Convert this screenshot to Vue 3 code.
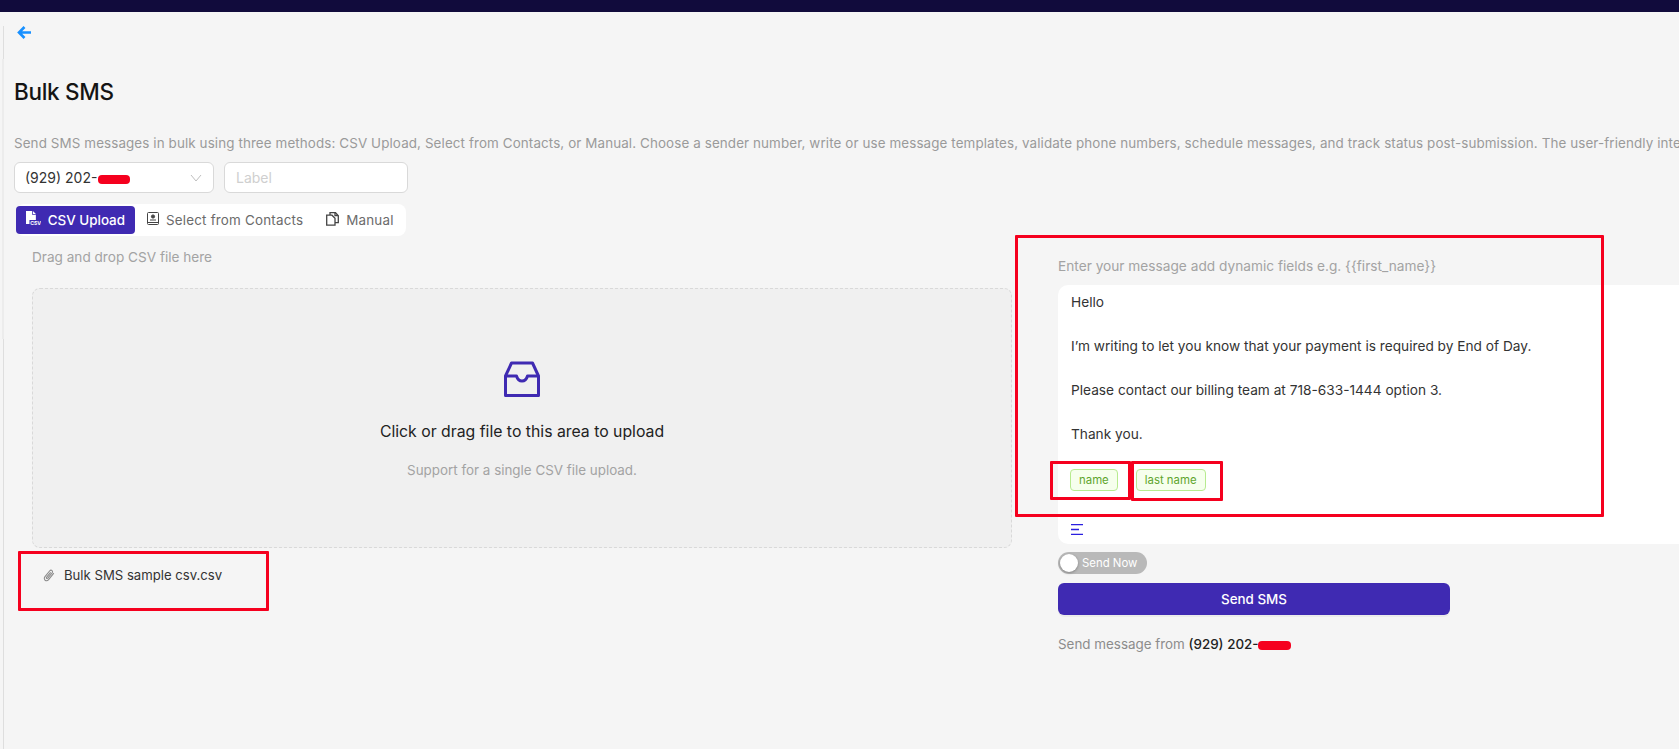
<template>
  <div class="page">
    <div class="topbar"></div>
    <div class="content">
      <button class="back-btn" aria-label="Back">
        <svg width="15" height="13" viewBox="0 0 15 13" fill="none" stroke="#1890ff" stroke-width="2.6">
          <path d="M14 6.500H2.500M7.500 1 2 6.500 7.500 12" />
        </svg>
      </button>
      <h1 class="title">Bulk SMS</h1>
      <p class="desc">
        Send SMS messages in bulk using three methods: CSV Upload, Select from Contacts, or Manual. Choose a sender number, write or use message templates, validate phone numbers, schedule messages, and track status post-submission. The user-friendly interface makes bulk messaging simple and efficient for every team.
      </p>

      <div class="sender-row">
        <div class="select">
          <span>(929) 202-<i class="redact"></i></span>
          <svg width="12" height="8" viewBox="0 0 12 8" fill="none" stroke="#bfbfbf" stroke-width="1">
            <path d="M1 1l5 6 5-6" />
          </svg>
        </div>
        <div class="label-input">Label</div>
      </div>

      <div class="tabs">
        <div
          v-for="tab in tabs"
          :key="tab.name"
          :class="['tab', { active: tab.name === activeTab }]"
        >
          <svg v-if="tab.icon === 'csv'" width="15" height="16" viewBox="0 0 15 16">
            <path fill="currentColor" d="M0 0h6.500L10 3.500V9H3.500v4H0z" />
            <path fill="#3f2ab2" d="M6.200 0v3.800H10V3L7 0z" />
            <path fill="currentColor" d="M7 0l3 3H7z" />
            <text x="4.200" y="14" font-size="5.200" font-weight="700" fill="currentColor" font-family="Inter, sans-serif">CSV</text>
          </svg>
          <svg v-else-if="tab.icon === 'contacts'" width="12" height="13" viewBox="0 0 12 13" fill="none" stroke="currentColor">
            <rect x=".5" y=".5" width="11" height="12" rx="1" />
            <circle cx="6" cy="4.500" r="1.600" fill="currentColor" />
            <path d="M3 8h6M.5 10.500h11" />
          </svg>
          <svg v-else width="13" height="14" viewBox="0 0 13 14" fill="none" stroke="currentColor" stroke-width="1.300">
            <path d="M4 3V.7h5.500l2.800 3v7H9" />
            <path d="M.7 3.200H6l3 3v7H.7z" />
            <path d="M9 .7v3h3.300" />
          </svg>
          <span>{{ tab.name }}</span>
        </div>
      </div>

      <div class="columns">
        <div class="left-col">
          <p class="hint drag-hint">Drag and drop CSV file here</p>
          <div class="dropzone">
            <svg class="inbox" width="36" height="36" viewBox="0 0 36 36" fill="none" stroke="#3f2ab2" stroke-width="3" stroke-linejoin="round">
              <path d="M7.500 2h21L34.500 15v19.500h-33V15z" />
              <path d="M1.500 15h11c1 3.400 3 5 5.500 5s4.500-1.600 5.500-5h11" />
            </svg>
            <p class="drop-text">Click or drag file to this area to upload</p>
            <p class="drop-sub">Support for a single CSV file upload.</p>
          </div>
          <div class="file-row">
            <svg width="12" height="14" viewBox="0 0 12 14" fill="none" stroke="#8c8c8c" stroke-width="1.100">
              <path d="M10.800 5.200 5.600 11.600c-1 1.200-2.500 1.400-3.500.6s-1.100-2.300-.1-3.500L6.600 3c.7-.8 1.700-1 2.400-.4s.7 1.600 0 2.400L4.800 10.200c-.4.4-.9.5-1.200.2s-.3-.8.1-1.200l4-4.900" />
            </svg>
            <span>Bulk SMS sample csv.csv</span>
          </div>
        </div>

        <div class="right-col">
          <p class="hint msg-hint">Enter your message add dynamic fields e.g. {{ placeholder }}</p>
          <div class="editor">
            <p v-for="line in messageLines" :key="line" class="msg-line">{{ line }}</p>
            <div class="tags">
              <span v-for="tag in tags" :key="tag" class="tag">{{ tag }}</span>
            </div>
            <svg class="align-icon" width="12" height="11" viewBox="0 0 12 11" stroke="#2a1fe0" stroke-width="1.300">
              <path d="M0 .7h12M0 5.500h8M0 10.300h12" />
            </svg>
          </div>
          <div class="switch">
            <span class="knob"></span>
            <span>Send Now</span>
          </div>
          <button class="send-btn">Send SMS</button>
          <p class="from">
            Send message from <b>(929) 202-<i class="redact small"></i></b>
          </p>
        </div>
      </div>
    </div>

    <!-- red review marks drawn over the screenshot -->
    <i class="mark mark-file"></i>
    <i class="mark mark-message"></i>
    <i class="mark mark-name"></i>
    <i class="mark mark-last"></i>
  </div>
</template>

<script setup>
const tabs = [
  { name: 'CSV Upload', icon: 'csv' },
  { name: 'Select from Contacts', icon: 'contacts' },
  { name: 'Manual', icon: 'copy' },
]
const activeTab = 'CSV Upload'
const placeholder = '{{first_name}}'
const messageLines = [
  'Hello',
  'I’m writing to let you know that your payment is required by End of Day.',
  'Please contact our billing team at 718-633-1444 option 3.',
  'Thank you.',
]
const tags = ['name', 'last name']
</script>

<style>
html, body {
  margin: 0;
  background: #f5f5f5;
  overflow: hidden;
}
</style>

<style scoped>
* {
  box-sizing: border-box;
}
.page {
  position: relative;
  width: 1679px;
  height: 749px;
  overflow: hidden;
  background: #f5f5f5;
  font-family: Inter, "Liberation Sans", sans-serif;
  color: #1f1f1f;
}
.topbar {
  height: 12px;
  background: #110b3c;
}
.content {
  position: relative;
  height: 737px;
  margin-left: 3px;
  padding: 0 0 0 13px;
  border-left: 1px solid #dedede;
}
/* sidebar edge showing next to the page line */
.content::before {
  content: "";
  position: absolute;
  left: -2px;
  top: 33px;
  width: 2px;
  height: 280px;
  background: #ececec;
}
.back-btn {
  display: block;
  width: 15px;
  height: 13px;
  margin: 14px 0 0;
  padding: 0;
  border: none;
  background: none;
}
.title {
  margin: 38px 0 0 -3px;
  font-size: 22.500px;
  line-height: 30px;
  font-weight: 500;
  letter-spacing: -0.3px;
  color: #141414;
}
.desc {
  margin: 26px 0 0 -3px;
  white-space: nowrap;
  font-size: 13.400px;
  line-height: 20px;
  letter-spacing: 0.11px;
  color: #9a9a9a;
}
.sender-row {
  display: flex;
  gap: 10px;
  margin: 9px 0 0 -3px;
}
.select, .label-input {
  display: flex;
  align-items: center;
  height: 31px;
  background: #fff;
  border: 1px solid #d9d9d9;
  border-radius: 6px;
  font-size: 14px;
}
.select {
  width: 200px;
  justify-content: space-between;
  padding: 0 11px 0 10px;
  color: #333;
}
.label-input {
  width: 184px;
  padding: 0 11px;
  color: #cfcfcf;
}
.redact {
  display: inline-block;
  width: 32px;
  height: 9px;
  margin-left: 1px;
  background: #f5001e;
  border-radius: 4px;
  vertical-align: -1px;
}
.redact.small {
  width: 33px;
  margin-left: 0;
}
.tabs {
  display: flex;
  align-items: center;
  width: 390px;
  height: 32px;
  margin: 11px 0 0 -1px;
  background: #fff;
  border-radius: 8px;
}
.tab {
  display: flex;
  align-items: center;
  gap: 7px;
  height: 28px;
  padding: 0 11px 0 12px;
  font-size: 13.400px;
  letter-spacing: 0.2px;
  color: #6b6b6b;
  white-space: nowrap;
}
.tab svg {
  margin-top: -3px;
  color: #444;
}
.tab.active {
  width: 119px;
  padding: 0 10px;
  background: #3f2ab2;
  color: #fff;
  font-weight: 500;
  letter-spacing: 0;
  border-radius: 4px;
}
.tab.active svg {
  color: #fff;
}
.columns {
  display: flex;
  align-items: flex-start;
}
.left-col {
  width: 980px;
  margin-left: 15px;
  flex: none;
}
.hint {
  margin: 0;
  font-size: 13.600px;
  line-height: 20px;
  color: #a3a3a3;
}
.drag-hint {
  margin-top: 11px;
}
.dropzone {
  display: flex;
  flex-direction: column;
  align-items: center;
  height: 260px;
  margin-top: 21px;
  padding-top: 72px;
  background: #f0f0f0;
  border: 1px dashed #d9d9d9;
  border-radius: 8px;
}
.drop-text {
  margin: 23px 0 0;
  font-size: 15.800px;
  line-height: 24px;
  color: #222;
}
.drop-sub {
  margin: 16px 0 0;
  font-size: 13.400px;
  line-height: 20px;
  color: #a3a3a3;
}
.file-row {
  display: flex;
  align-items: center;
  gap: 9px;
  margin: 17px 0 0 11px;
  font-size: 13.150px;
  line-height: 20px;
  color: #333;
}
.right-col {
  flex: none;
  width: 621px;
  margin-left: 46px;
}
.msg-hint {
  margin-top: 20px;
  font-size: 13.700px;
}
.editor {
  height: 259px;
  margin-top: 9px;
  padding: 6px 13px 0 12px;
  background: #fff;
  border-radius: 10px 0 0 10px;
}
.msg-line {
  margin: 0 0 22px 1px;
  font-size: 13.700px;
  line-height: 22px;
  color: #333;
}
.tags {
  display: flex;
  gap: 18px;
  margin-top: 24px;
}
.tag {
  height: 22px;
  padding: 0 8px;
  border: 1px solid #b7eb8f;
  border-radius: 4px;
  background: #f6ffed;
  color: #5fa52d;
  font-size: 11.400px;
  line-height: 20px;
}
.align-icon {
  display: block;
  margin: 33px 0 0 1px;
}
.switch {
  display: flex;
  align-items: center;
  gap: 4px;
  width: 89px;
  height: 22px;
  margin-top: 8px;
  padding: 0 2px;
  background: #b9b9b9;
  border-radius: 11px;
  color: #fff;
  font-size: 11.400px;
}
.knob {
  width: 18px;
  height: 18px;
  background: #fff;
  border-radius: 50%;
  box-shadow: 0 1px 3px rgba(0, 0, 0, 0.3);
}
.send-btn {
  display: block;
  width: 392px;
  height: 32px;
  margin-top: 9px;
  padding: 0;
  border: none;
  border-radius: 6px;
  background: #3f2ab2;
  color: #fff;
  font: 500 13.400px Inter, sans-serif;
  box-shadow: 0 2px 0 rgba(0, 0, 0, 0.04);
}
.from {
  margin: 19px 0 0;
  font-size: 13.400px;
  line-height: 20px;
  color: #8c8c8c;
}
.from b {
  font-weight: 500;
  color: #222;
}
.mark {
  position: absolute;
  display: block;
  border: 3px solid #f5001e;
  border-radius: 1px;
}
.mark-file {
  left: 18px;
  top: 551px;
  width: 251px;
  height: 60px;
}
.mark-message {
  left: 1015px;
  top: 235px;
  width: 589px;
  height: 282px;
}
.mark-name {
  left: 1050px;
  top: 461px;
  width: 81px;
  height: 39px;
}
.mark-last {
  left: 1131px;
  top: 461px;
  width: 92px;
  height: 40px;
}
</style>
